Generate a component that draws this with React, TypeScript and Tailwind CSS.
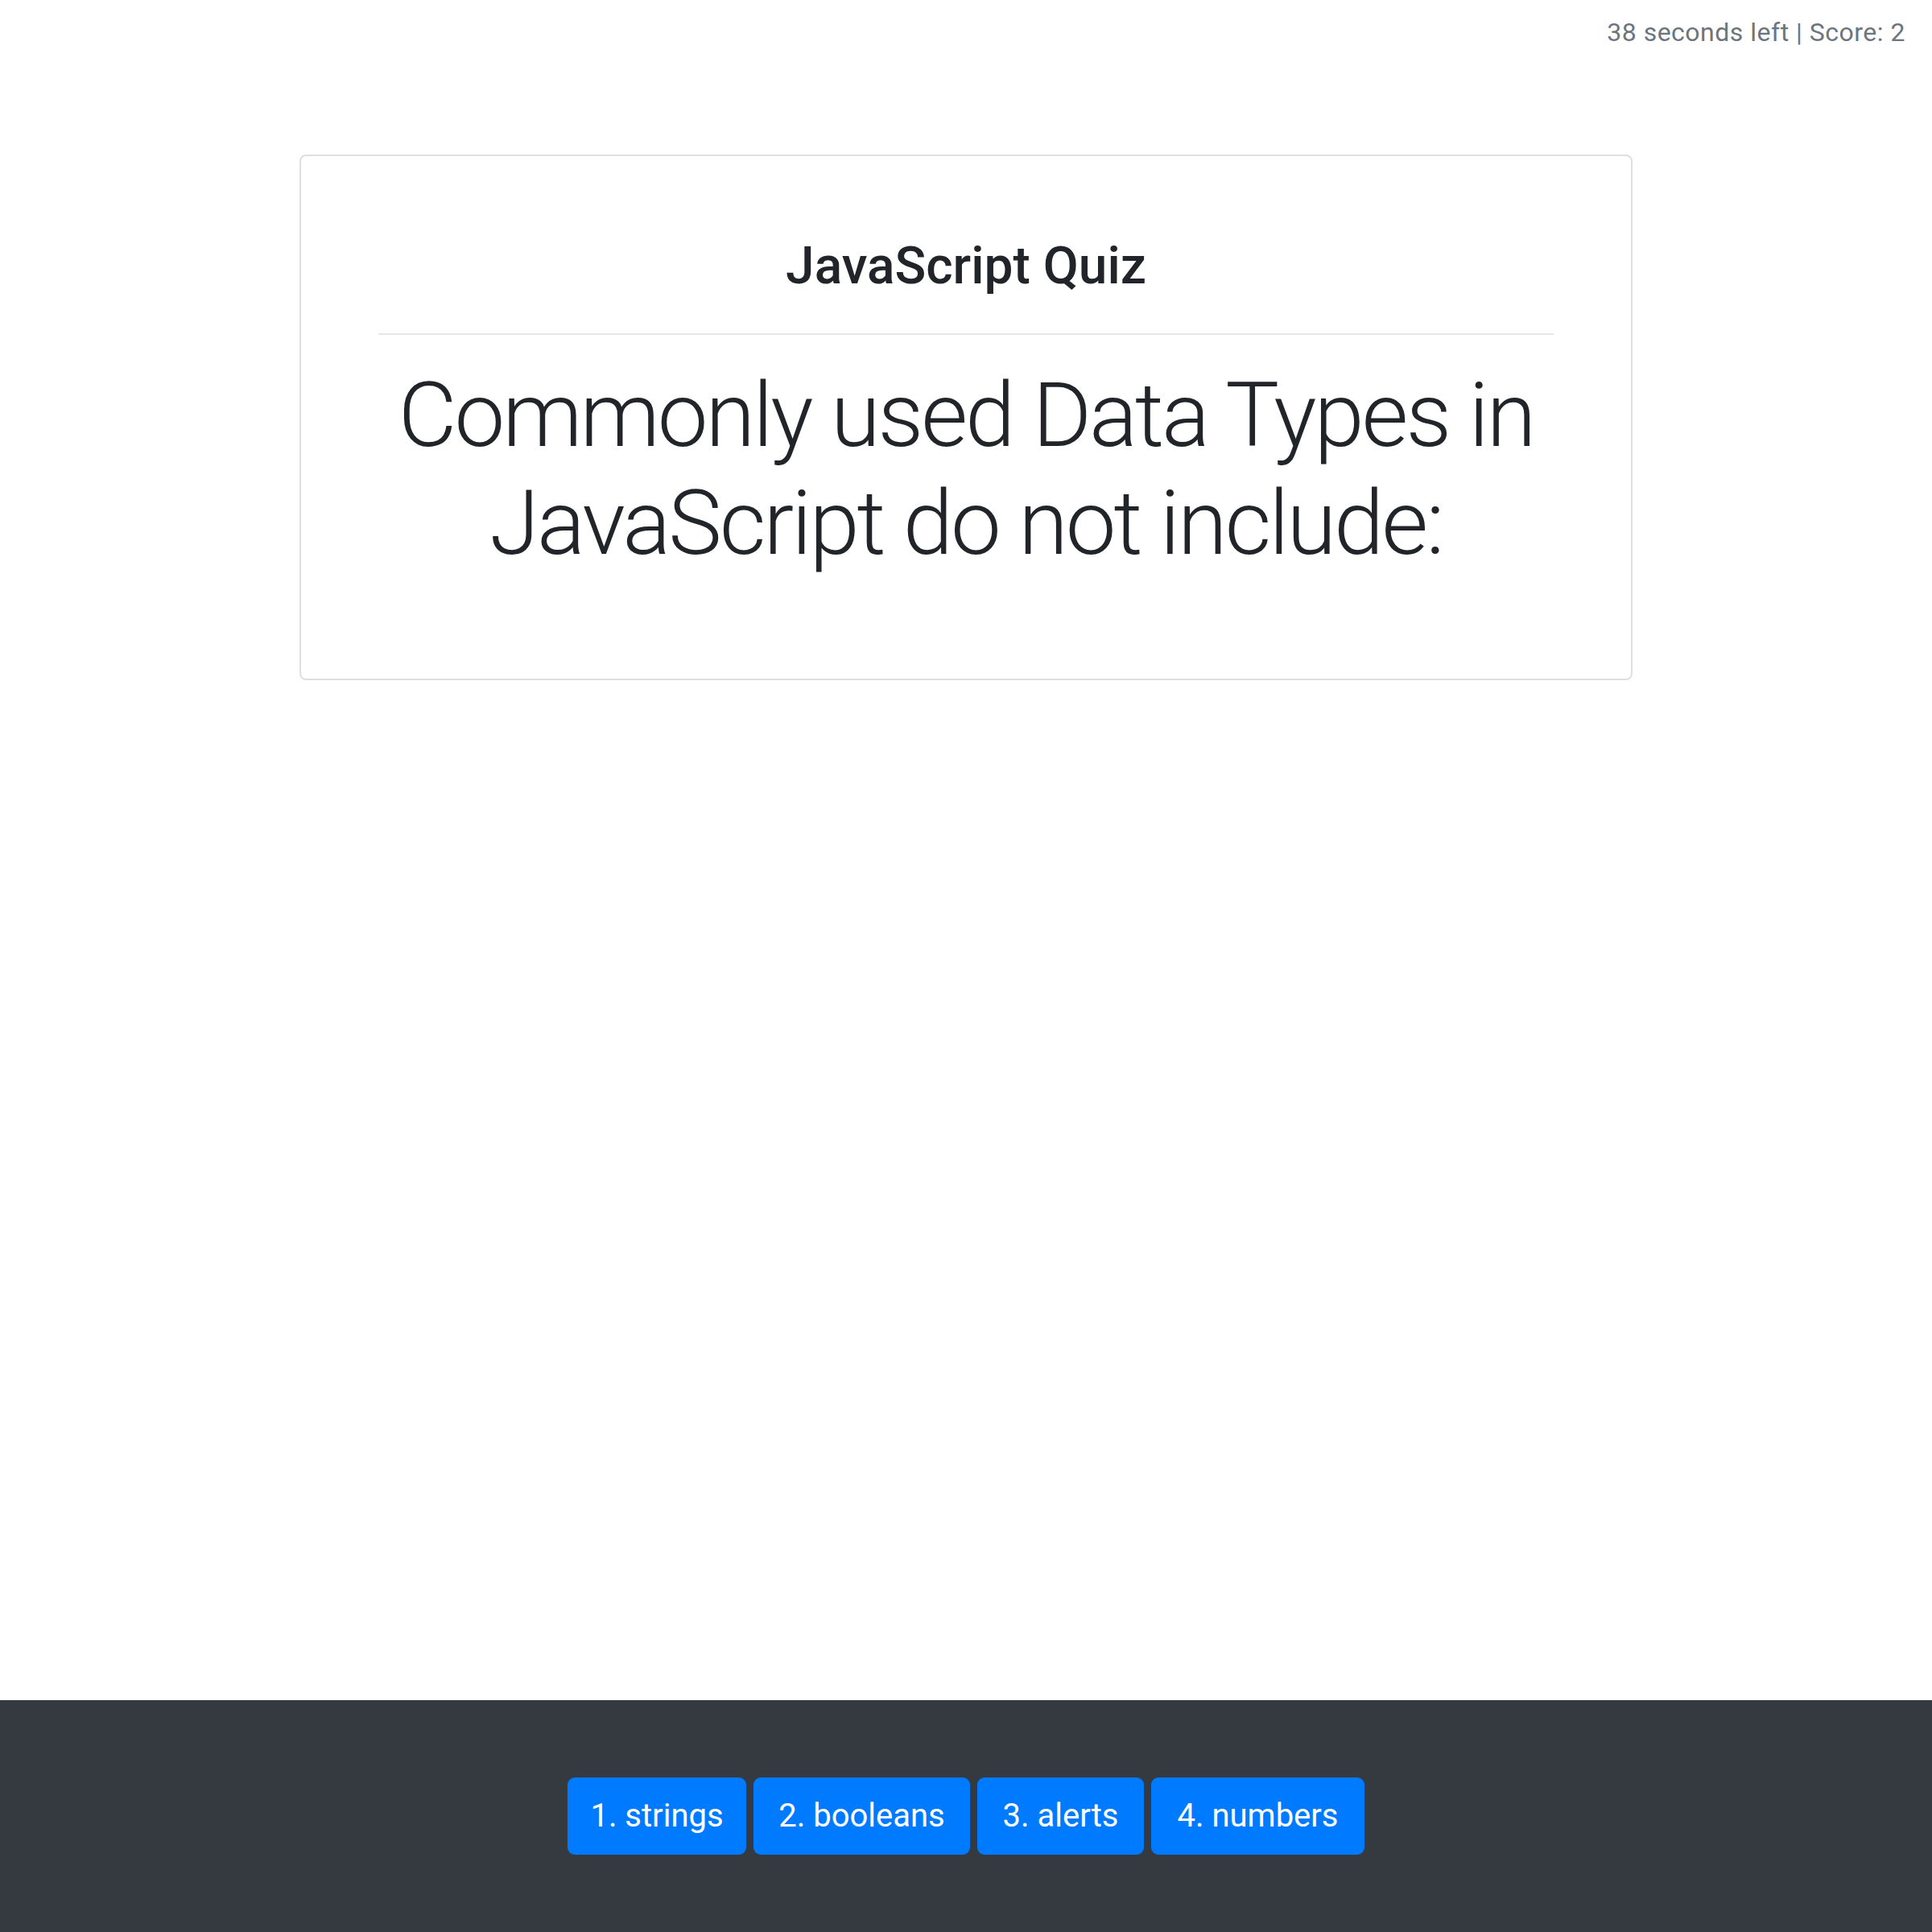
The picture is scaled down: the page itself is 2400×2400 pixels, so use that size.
import React from "react";

const FONT = { fontFamily: 'Roboto, Inter, "Liberation Sans", sans-serif' };

export default function App() {
  const answers = [
    { label: "1. strings", w: "w-[222px]" },
    { label: "2. booleans", w: "w-[269px]" },
    { label: "3. alerts", w: "w-[207px]" },
    { label: "4. numbers", w: "w-[265px]" },
  ];
  return (
    <div className="flex min-h-[2400px] flex-col bg-white text-[#212529]" style={FONT}>
      <div className="flex justify-end px-[33px] pt-[16px]">
        <span className="text-[32px] leading-[48px] tracking-[0.5px] text-[#6c757d]">38 seconds left | Score: 2</span>
      </div>
      <div className="mt-[128px] flex justify-center">
        <div className="w-[1656px] rounded-[8px] border-2 border-[#dfdfdf] px-[96px] pt-[98px] pb-[126px]">
          <h2 className="text-center text-[64px] leading-[77px] font-medium">JavaScript Quiz</h2>
          <div className="mt-[45px] mb-[33px] h-[2px] bg-[#e5e5e5]" />
          <p className="text-center text-[112px] leading-[134px] font-light tracking-[-3px]">
            Commonly used Data Types in JavaScript do not include:
          </p>
        </div>
      </div>
      <div className="mt-auto flex h-[288px] items-center justify-center gap-[9px] bg-[#343a40]">
        {answers.map((a) => (
          <button
            key={a.label}
            className={`${a.w} h-[96px] rounded-[9px] bg-[#007bff] text-center text-[40px] leading-[60px] text-white`}
          >
            {a.label}
          </button>
        ))}
      </div>
    </div>
  );
}
